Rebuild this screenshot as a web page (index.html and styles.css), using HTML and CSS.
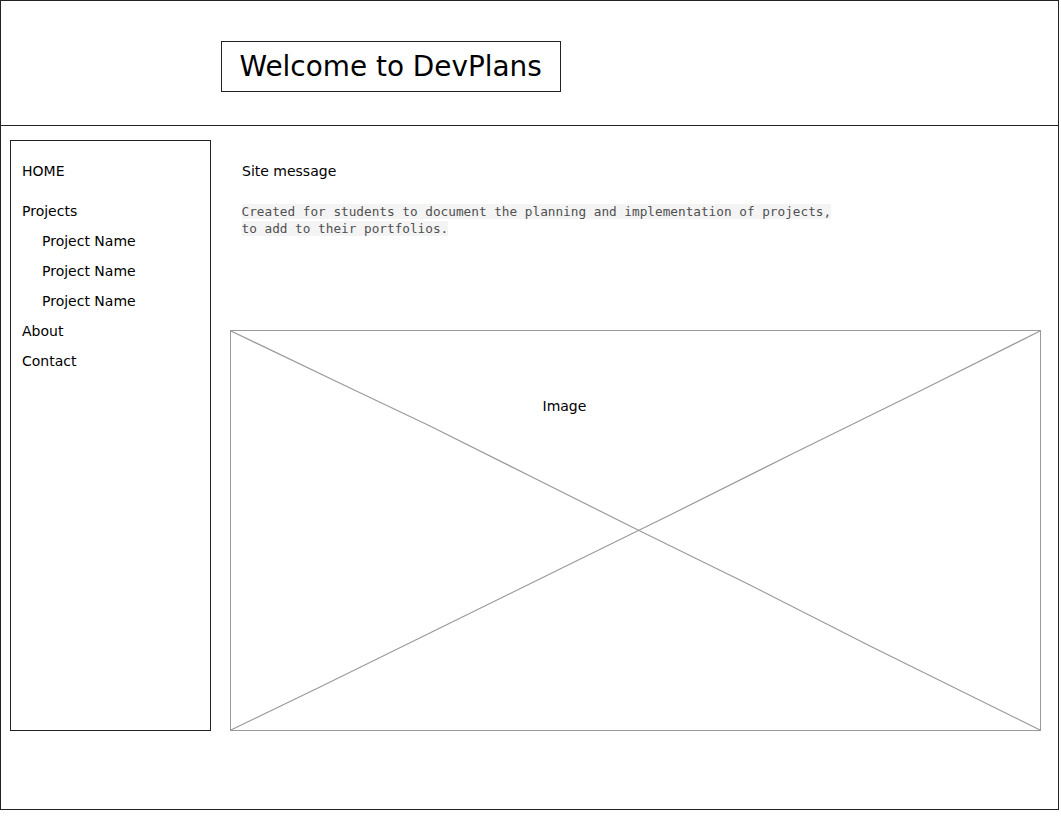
FILE: index.html
```html
<!DOCTYPE html>
<html>
<head>
<meta charset="utf-8">
<link rel="stylesheet" href="styles.css">
</head>
<body>
<div class="frame">
  <header class="header">
    <div class="title">
      <h1>Welcome to DevPlans</h1>
    </div>
  </header>
  <div class="main">
    <nav class="sidebar">
      <ul class="nav">
        <li class="nav-item home">HOME</li>
        <li class="nav-item">Projects</li>
        <li class="nav-item sub">Project Name</li>
        <li class="nav-item sub">Project Name</li>
        <li class="nav-item sub">Project Name</li>
        <li class="nav-item">About</li>
        <li class="nav-item">Contact</li>
      </ul>
    </nav>
    <section class="content">
      <p class="site-message">Site message</p>
      <p class="code"><code>Created for students to document the planning and implementation of projects,</code><br><code>to add to their portfolios.</code></p>
      <div class="image">
        <svg class="cross" viewBox="0 0 811 401" preserveAspectRatio="none">
          <path d="M1 1 L120 58 L200 96 L300 146 L410 201 L520 255 L640 316 L810 400" />
          <path d="M1 400 L90 357 L210 298 L330 239 L440 185 L560 125 L690 61 L810 1" />
        </svg>
        <span class="image-label">Image</span>
      </div>
    </section>
  </div>
</div>
</body>
</html>
```
FILE: styles.css
```css
html, body {
  margin: 0;
  padding: 0;
  background: #fff;
}

body {
  font-family: "DejaVu Sans", "Liberation Sans", sans-serif;
  color: #000;
}

.frame {
  box-sizing: border-box;
  width: 1059px;
  height: 810px;
  border: 1.5px solid #222;
  display: flex;
  flex-direction: column;
}

.header {
  box-sizing: border-box;
  height: 125px;
  border-bottom: 1.5px solid #222;
  padding: 39.5px 0 0 219.5px;
  flex: none;
}

.title {
  box-sizing: border-box;
  width: 340px;
  height: 51px;
  border: 1.5px solid #222;
  display: flex;
  align-items: center;
  padding: 2px 0 0 18px;
}

.title h1 {
  margin: 0;
  font-weight: normal;
  font-size: 27.9px;
  line-height: 1;
}

.main {
  display: flex;
  align-items: flex-start;
  padding: 14px 0 0 8.5px;
  gap: 19px;
}

.sidebar {
  box-sizing: border-box;
  width: 201px;
  height: 591px;
  border: 1.5px solid #222;
  flex: none;
}

.nav {
  list-style: none;
  margin: 0;
  padding: 14.5px 0 0 11.5px;
}

.nav-item {
  font-size: 14px;
  line-height: 30px;
  height: 30px;
}

.nav-item.home {
  margin-bottom: 10px;
}

.nav-item.sub {
  padding-left: 20px;
}

.content {
  width: 811px;
  flex: none;
}

.site-message {
  margin: 0;
  padding: 16px 0 0 12.5px;
  font-size: 14px;
  line-height: 30px;
}

.code {
  margin: 17px 0 0 12px;
  font-family: "DejaVu Sans Mono", "Liberation Mono", monospace;
  font-size: 12.72px;
  line-height: 17px;
  color: #505050;
}

.code code {
  font-family: inherit;
  background: #f4f4f4;
}

.image {
  position: relative;
  box-sizing: border-box;
  margin-top: 93px;
  width: 811px;
  height: 401px;
  border: 1px solid #9a9a9a;
}

.cross {
  position: absolute;
  left: -1px;
  top: -1px;
  width: 811px;
  height: 401px;
  fill: none;
  stroke: #9a9a9a;
  stroke-width: 1.2;
}

.image-label {
  position: absolute;
  left: 312px;
  top: 65px;
  font-size: 14px;
  line-height: 20px;
}
```
